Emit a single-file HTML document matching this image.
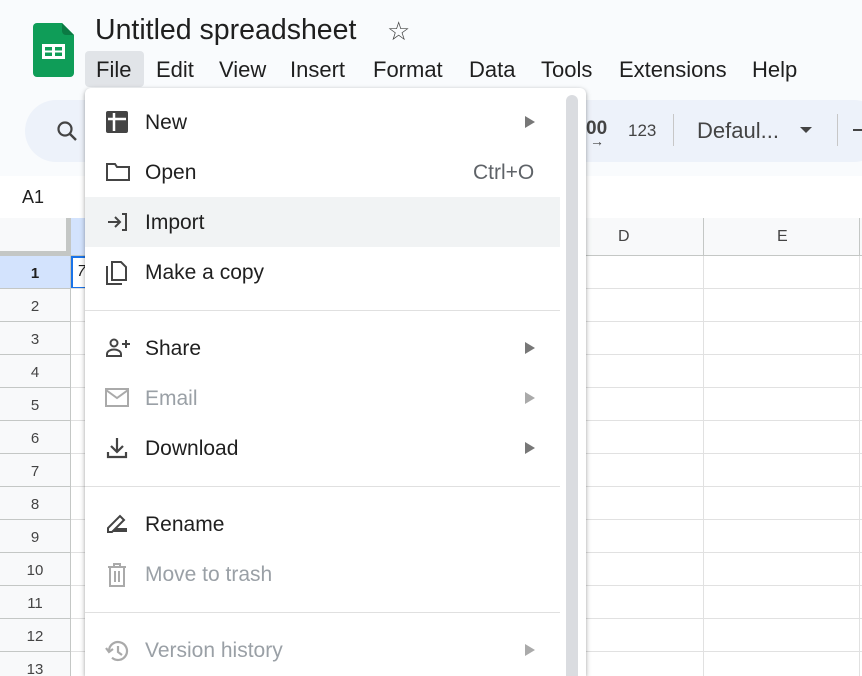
<!DOCTYPE html>
<html><head><style>
*{margin:0;padding:0;box-sizing:border-box}
html{width:862px;height:676px;overflow:hidden}
body{width:862px;height:676px;overflow:hidden;background:#f9fbfd;font-family:"Liberation Sans",Arial,sans-serif;position:relative;color:#1f1f1f}
.abs{position:absolute}
.mb{position:absolute;top:57px;font-size:22px;color:#1f1f1f}
.grid{position:absolute;left:0;top:218px;width:862px;height:458px;background:#fff;overflow:hidden}
.rn{position:absolute;left:0;width:71px;text-align:center;font-size:15px;color:#444;border-bottom:1px solid #c4c7c5;border-right:1px solid #c4c7c5}
.hl{position:absolute;height:1px;background:#e1e1e1;left:71px;right:0}
.menu{position:absolute;left:85px;top:88px;width:501px;height:588px;background:#fff;border-radius:6px 6px 0 0;box-shadow:0 2px 6px rgba(0,0,0,.25),0 1px 3px rgba(0,0,0,.15);overflow:hidden}
.it{position:absolute;left:0;width:475px;height:50px}
.it .t{position:absolute;left:60px;top:14px;font-size:21px;color:#1f1f1f}
.it.d .t{color:#9aa0a6}
.it .ar{position:absolute;left:440px;top:19px;width:0;height:0;border-left:10px solid #777;border-top:6px solid transparent;border-bottom:6px solid transparent}
.it.d .ar{border-left-color:#aaa}
.it svg{position:absolute;left:20px;top:13px}
.sep{position:absolute;left:0;width:475px;height:1px;background:#e0e0e0}
</style></head><body>
<svg class="abs" style="left:33px;top:23px" width="41" height="54" viewBox="0 0 41 54"><path d="M4 0h25l12 12v38a4 4 0 0 1-4 4H4a4 4 0 0 1-4-4V4a4 4 0 0 1 4-4z" fill="#0f9d58"/><path d="M29 0l12 12H33a4 4 0 0 1-4-4z" fill="#0b7a43"/><rect x="9" y="21" width="23" height="15" fill="#fff"/><rect x="12" y="24" width="7" height="3.5" fill="#0f9d58"/><rect x="22" y="24" width="7" height="3.5" fill="#0f9d58"/><rect x="12" y="29.5" width="7" height="3.5" fill="#0f9d58"/><rect x="22" y="29.5" width="7" height="3.5" fill="#0f9d58"/></svg>
<div class="abs" style="left:95px;top:14px;font-size:28.5px;color:#1f1f1f">Untitled spreadsheet</div>
<div class="abs" style="left:387px;top:16px;font-size:26px;color:#444">☆</div>
<div class="abs" style="left:85px;top:51px;width:59px;height:36px;background:#e1e4e8;border-radius:4px"></div>
<div class="mb" style="left:96px">File</div>
<div class="mb" style="left:156px">Edit</div>
<div class="mb" style="left:219px">View</div>
<div class="mb" style="left:290px">Insert</div>
<div class="mb" style="left:373px">Format</div>
<div class="mb" style="left:469px">Data</div>
<div class="mb" style="left:541px">Tools</div>
<div class="mb" style="left:619px">Extensions</div>
<div class="mb" style="left:752px">Help</div>
<div class="abs" style="left:25px;top:100px;width:860px;height:62px;background:#edf2fa;border-radius:31px"></div>
<svg class="abs" style="left:55px;top:119px" width="24" height="24" viewBox="0 0 24 24"><circle cx="10" cy="10" r="6.5" fill="none" stroke="#444" stroke-width="2.2"/><path d="M15 15l6 6" stroke="#444" stroke-width="2.4"/></svg>
<div class="abs" style="left:586px;top:118px;font-size:19px;font-weight:bold;color:#444">00</div>
<div class="abs" style="left:590px;top:133px;font-size:14px;color:#444">→</div>
<div class="abs" style="left:628px;top:121px;font-size:17px;color:#444">123</div>
<div class="abs" style="left:673px;top:114px;width:1px;height:32px;background:#c7c7c7"></div>
<div class="abs" style="left:697px;top:118px;font-size:22px;color:#444">Defaul...</div>
<div class="abs" style="left:800px;top:127px;border-top:6px solid #444;border-left:6px solid transparent;border-right:6px solid transparent"></div>
<div class="abs" style="left:837px;top:114px;width:1px;height:32px;background:#c7c7c7"></div>
<div class="abs" style="left:853px;top:129px;width:9px;height:2px;background:#444"></div>
<div class="abs" style="left:0;top:176px;width:862px;height:42px;background:#fff"></div>
<div class="abs" style="left:22px;top:187px;font-size:18px;color:#1f1f1f">A1</div>
<div class="grid">
<div class="abs" style="left:0;top:0;width:71px;height:38px;background:#f8f9fa;border-right:5px solid #c4c7c5;border-bottom:5px solid #c4c7c5"></div>
<div class="abs" style="left:71px;top:0;width:20px;height:38px;background:#d3e3fd;border-bottom:1px solid #c4c7c5"></div>
<div class="abs" style="left:586px;top:0;width:276px;height:38px;background:#f8f9fa;border-bottom:1px solid #c4c7c5"></div>
<div class="abs" style="left:703px;top:0;width:1px;height:38px;background:#c4c7c5"></div>
<div class="abs" style="left:859px;top:0;width:1px;height:38px;background:#c4c7c5"></div>
<div class="abs" style="left:618px;top:10px;font-size:16px;color:#444">D</div>
<div class="abs" style="left:777px;top:10px;font-size:16px;color:#444">E</div>
<div class="abs" style="left:703px;top:38px;width:1px;height:420px;background:#e1e1e1"></div>
<div class="abs" style="left:859px;top:38px;width:1px;height:420px;background:#e1e1e1"></div>
<div class="abs" style="left:71px;top:38px;width:20px;height:33px;border:2px solid #1a73e8"></div>
<div class="abs" style="left:77px;top:45px;font-size:16px;font-style:italic">7</div>
</div>
<div class="rn" style="top:256px;height:33px;line-height:35px;background:#d3e3fd;font-weight:bold;color:#1f1f1f">1</div>
<div class="rn" style="top:289px;height:33px;line-height:35px;background:#f8f9fa">2</div>
<div class="rn" style="top:322px;height:33px;line-height:35px;background:#f8f9fa">3</div>
<div class="rn" style="top:355px;height:33px;line-height:35px;background:#f8f9fa">4</div>
<div class="rn" style="top:388px;height:33px;line-height:35px;background:#f8f9fa">5</div>
<div class="rn" style="top:421px;height:33px;line-height:35px;background:#f8f9fa">6</div>
<div class="rn" style="top:454px;height:33px;line-height:35px;background:#f8f9fa">7</div>
<div class="rn" style="top:487px;height:33px;line-height:35px;background:#f8f9fa">8</div>
<div class="rn" style="top:520px;height:33px;line-height:35px;background:#f8f9fa">9</div>
<div class="rn" style="top:553px;height:33px;line-height:35px;background:#f8f9fa">10</div>
<div class="rn" style="top:586px;height:33px;line-height:35px;background:#f8f9fa">11</div>
<div class="rn" style="top:619px;height:33px;line-height:35px;background:#f8f9fa">12</div>
<div class="rn" style="top:652px;height:33px;line-height:35px;background:#f8f9fa">13</div>
<div class="hl" style="top:288px"></div><div class="hl" style="top:321px"></div><div class="hl" style="top:354px"></div><div class="hl" style="top:387px"></div><div class="hl" style="top:420px"></div><div class="hl" style="top:453px"></div><div class="hl" style="top:486px"></div><div class="hl" style="top:519px"></div><div class="hl" style="top:552px"></div><div class="hl" style="top:585px"></div><div class="hl" style="top:618px"></div><div class="hl" style="top:651px"></div>
<div class="menu">
<div class="abs" style="left:481px;top:7px;width:12px;height:600px;background:#dadce0;border-radius:6px"></div>
<div class="it" style="top:9px"><svg width="24" height="24" viewBox="0 0 24 24"><rect x="1" y="1" width="22" height="22" rx="2" fill="#444"/><path d="M9 3v18M3 9h18" stroke="#fff" stroke-width="2.5"/></svg><div class="t">New</div><div class="ar"></div></div>
<div class="it" style="top:59px"><svg width="26" height="24" viewBox="0 0 26 24"><path d="M2 4h8l2 3h12v13H2z" fill="none" stroke="#444" stroke-width="2"/></svg><div class="t">Open</div><div class="t" style="left:388px;color:#5f6368">Ctrl+O</div></div>
<div class="it" style="top:109px;background:#f1f3f4"><svg width="24" height="24" viewBox="0 0 24 24"><path d="M3 12h11M10 7l5 5-5 5M17 4h4v16h-4" fill="none" stroke="#444" stroke-width="2"/></svg><div class="t">Import</div></div>
<div class="it" style="top:159px"><svg width="24" height="26" viewBox="0 0 24 26"><path d="M2 6v18h15" fill="none" stroke="#444" stroke-width="2"/><path d="M7 2h9l5 5v13H7z" fill="none" stroke="#444" stroke-width="2"/></svg><div class="t">Make a copy</div></div>
<div class="sep" style="top:222px"></div>
<div class="it" style="top:235px"><svg width="26" height="24" viewBox="0 0 26 24"><circle cx="9" cy="7" r="3.5" fill="none" stroke="#444" stroke-width="2"/><path d="M2 20v-2c0-3 4-4.5 7-4.5s7 1.5 7 4.5v2z" fill="none" stroke="#444" stroke-width="2"/><path d="M21 4v8M17 8h8" stroke="#444" stroke-width="2"/></svg><div class="t">Share</div><div class="ar"></div></div>
<div class="it d" style="top:285px"><svg width="26" height="24" viewBox="0 0 26 24"><rect x="1" y="3" width="22" height="17" fill="none" stroke="#aaa" stroke-width="2"/><path d="M1 4l11 8 11-8" fill="none" stroke="#aaa" stroke-width="2"/></svg><div class="t">Email</div><div class="ar"></div></div>
<div class="it" style="top:335px"><svg width="24" height="24" viewBox="0 0 24 24"><path d="M12 2v13M6 10l6 6 6-6M3 16v5h18v-5" fill="none" stroke="#444" stroke-width="2.2"/></svg><div class="t">Download</div><div class="ar"></div></div>
<div class="sep" style="top:398px"></div>
<div class="it" style="top:411px"><svg width="24" height="24" viewBox="0 0 24 24"><path d="M3 20v-4L15 4l4 4L7 20z" fill="none" stroke="#444" stroke-width="2"/><path d="M12 16h10v4H8z" fill="#444"/></svg><div class="t">Rename</div></div>
<div class="it d" style="top:461px"><svg width="24" height="26" viewBox="0 0 24 26"><path d="M3 5h18M9 5V2h6v3M5 5v19h14V5M10 9v11M14 9v11" fill="none" stroke="#aaa" stroke-width="2"/></svg><div class="t">Move to trash</div></div>
<div class="sep" style="top:524px"></div>
<div class="it d" style="top:537px"><svg width="26" height="26" viewBox="0 0 26 26"><path d="M4 13a9 9 0 1 1 3 6.7" fill="none" stroke="#aaa" stroke-width="2.2"/><path d="M1 10l3 4 4-3M13 8v6l4 3" fill="none" stroke="#aaa" stroke-width="2.2"/></svg><div class="t">Version history</div><div class="ar"></div></div>
</div>
</body></html>
